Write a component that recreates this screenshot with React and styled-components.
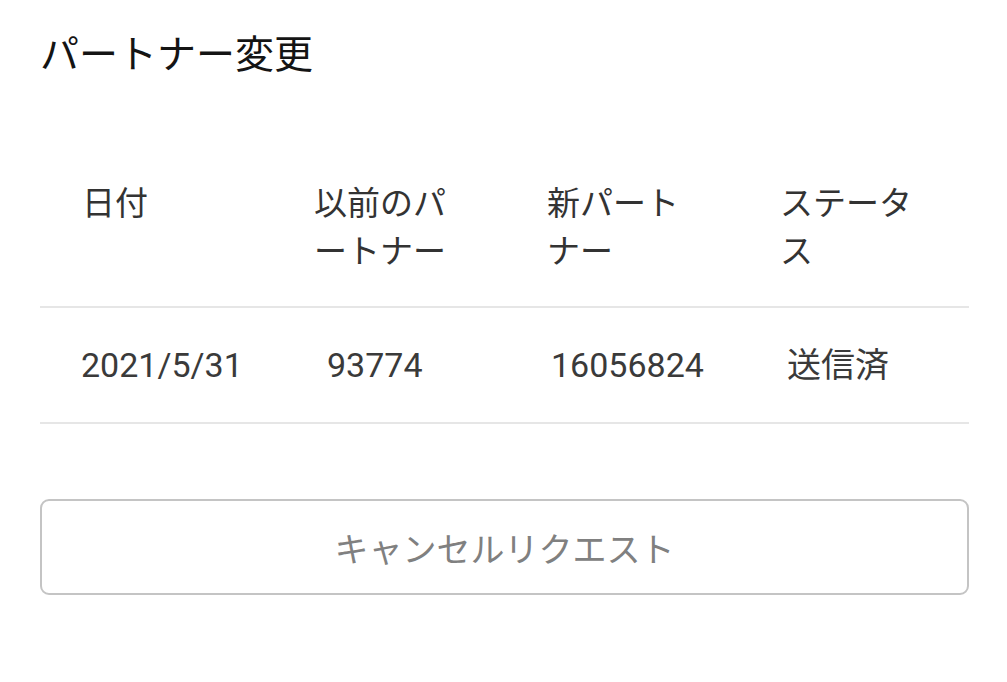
import React from "react";
import styled, { createGlobalStyle } from "styled-components";

const GlobalStyle = createGlobalStyle`
  body {
    margin: 0;
    background: #fff;
    font-family: Roboto, "Noto Sans CJK JP", sans-serif;
  }
`;

const Page = styled.div`
  width: 929px;
  padding: 28px 0 0 40px;
`;

const Title = styled.h1`
  margin: 0;
  font-size: 39px;
  line-height: 54px;
  font-weight: 400;
  color: #141414;
`;

const Table = styled.div`
  margin-top: 68px;
  display: grid;
  grid-template-columns: 232px 233px 233px 231px;
`;

const HeadCell = styled.div`
  padding: 30px 44px 30px 42px;
  font-size: 33px;
  line-height: 48px;
  color: #333;
  line-break: loose;
  border-bottom: 2px solid #e6e6e6;
`;

const Cell = styled.div`
  padding: 33px 0 33px ${p => p.$inset}px;
  font-size: 34px;
  line-height: 48px;
  color: #3a3a3a;
  white-space: nowrap;
  border-bottom: 2px solid #e6e6e6;
`;

const CancelButton = styled.button`
  margin-top: 75px;
  width: 929px;
  height: 96px;
  border: 2px solid #c4c4c4;
  border-radius: 9px;
  background: #fff;
  font-family: Roboto, "Noto Sans CJK JP", sans-serif;
  font-size: 34px;
  color: #808080;
  cursor: pointer;
`;

const headers = ["日付", "以前のパートナー", "新パートナー", "ステータス"];
const row = [
  { value: "2021/5/31", inset: 41 },
  { value: "93774", inset: 55 },
  { value: "16056824", inset: 46 },
  { value: "送信済", inset: 49 },
];

const App = () => {
  return (
    <>
      <GlobalStyle />
      <Page>
        <Title>パートナー変更</Title>
        <Table>
          {headers.map(h => (
            <HeadCell key={h}>{h}</HeadCell>
          ))}
          {row.map(c => (
            <Cell key={c.value} $inset={c.inset}>{c.value}</Cell>
          ))}
        </Table>
        <CancelButton>キャンセルリクエスト</CancelButton>
      </Page>
    </>
  );
};

export default App;
